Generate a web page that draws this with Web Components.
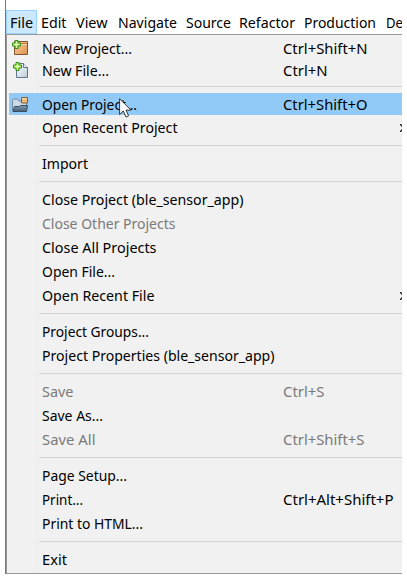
<!DOCTYPE html>
<html lang="en"><head><meta charset="utf-8"><title>File menu</title>
<style>html,body{margin:0;background:#fff;width:407px;height:580px;overflow:hidden}body{font:14.1px/20px "Noto Sans","Open Sans",sans-serif;color:#000}</style></head><body>
<app-window></app-window>
<script>
class FitText extends HTMLElement{
 connectedCallback(){
  const r=this.attachShadow({mode:'open'});
  r.innerHTML='<style>:host{display:block;white-space:nowrap}span{display:inline-block;transform-origin:0 50%}</style><span><slot></slot></span>';
  const s=r.querySelector('span'),w=+this.getAttribute('w');
  if(w)s.style.transform=`scaleX(${w/s.getBoundingClientRect().width})`;
 }
}
customElements.define('fit-text',FitText);
const plus='<path d="M3 .5h3v2.500h2.500v3h-2.500v2.500h-3v-2.500h-2.500v-3h2.500z" fill="#b5ef72" stroke="#2f8a16"/><path d="M4.500 1.500v6M1.500 4.500h6" stroke="#dcffac"/>';
const icons={
project:'<defs><linearGradient id="g" x2="1" y2="1"><stop stop-color="#f8cf98"/><stop offset="1" stop-color="#dc9250"/></linearGradient></defs><path d="M2.500 1.500h13v13h-13z" fill="url(#g)" stroke="#80552f"/><path d="M9 3.500h6" stroke="#b77b43"/><path d="M3 4.500h12" stroke="#f7d3a0"/>'+plus,
file:'<defs><linearGradient id="g" x2="1" y2="1"><stop stop-color="#fff"/><stop offset="1" stop-color="#b9cbda"/></linearGradient></defs><path d="M4.500 1.500h7l4 4v10h-11z" fill="url(#g)" stroke="#63758a"/><path d="M11.500 1.500v4h4" fill="#edf5fb" stroke="#63758a"/><g transform="translate(1 0)">'+plus+'</g>',
open:'<defs><linearGradient id="g" x2="0" y2="1"><stop stop-color="#849cb1"/><stop offset="1" stop-color="#465c73"/></linearGradient></defs><path d="M.5 14.500v-10l1-1.500h4l1.500 2h7.500v9.500z" fill="#cbd9e5" stroke="#71879d"/><path d="M1 15.500l1.500-5h5l1-1h7l-1 6z" fill="url(#g)" stroke="#344b63"/><path d="M9.500 1.500h6v5.500h-6z" fill="#f0bc78" stroke="#855d35"/><path d="M10 2.500h5" stroke="#ffdda4"/>'};
class MenuItem extends HTMLElement{
 connectedCallback(){
  const a=n=>this.getAttribute(n),r=this.attachShadow({mode:'open'});
  r.innerHTML=`<style>:host{display:grid;grid-template-columns:28px 5px 241px 119px;height:24px;align-items:center;margin-left:1px;position:relative}
  :host([disabled]){color:#7a7a7a}:host([selected]){background:#91c9f7;height:22px!important;margin-bottom:1px}:host([selected]) fit-text{padding-top:1px}
  .icon{width:17px;height:17px;margin-left:3px;display:block}.label{grid-column:3}.key{grid-column:4}
  .arrow{position:absolute;right:0;top:8px;width:2px;height:8px}
  </style>${a('icon')?`<svg class="icon" viewBox="0 0 17 17">${icons[a('icon')]}</svg>`:''}
  <fit-text class="label" w="${a('w')}">${a('label')}</fit-text>${a('key')?`<fit-text class="key" w="${a('kw')}">${a('key')}</fit-text>`:''}
  ${this.hasAttribute('sub')?'<svg class="arrow" viewBox="0 0 2 8"><path d="M0 0l4 4-4 4" fill="none" stroke="#222" stroke-width="1.300"/></svg>':''}`;
  if(a('h'))this.style.height=a('h')+'px';
 }
}
customElements.define('menu-item',MenuItem);
customElements.define('menu-separator',class extends HTMLElement{
 connectedCallback(){this.attachShadow({mode:'open'}).innerHTML='<style>:host{display:block;height:12px;box-sizing:border-box;padding:5px 0 0 31px}div{height:1px;background:#d5d5d5}</style><div></div>'}
});
customElements.define('menu-bar',class extends HTMLElement{
 connectedCallback(){
  const m=[['File',31,23],['Edit',35,25.500],['View',42,31.500],['Navigate',68,59],['Source',53,45],['Refactor',65,56],['Production',82,72],['De',17,17]];
  this.attachShadow({mode:'open'}).innerHTML=`<style>:host{display:flex;box-sizing:border-box;height:34px;padding-top:10px;overflow:hidden}.tab{flex:none;box-sizing:border-box;height:24px;padding-top:3px}.on{background:#cce8ff;border:1px solid #99d1ff;padding:2px 0 0 3px}</style>${m.map((x,i)=>`<div class="tab ${i?'':'on'}" style="width:${x[1]}px${i==1?';margin-left:4px':''}"><fit-text w="${x[2]}">${x[0]}</fit-text></div>`).join('')}`;
 }
});
customElements.define('mouse-pointer',class extends HTMLElement{
 connectedCallback(){this.attachShadow({mode:'open'}).innerHTML='<style>:host{position:absolute;left:119px;top:98px;width:13px;height:20px}svg{display:block}</style><svg width="13" height="20" viewBox="0 0 13 20"><path d="M.6.8v15.700l3.700-3.500 2.700 6 2.600-1.200-2.600-5.700h5z" fill="#fff" stroke="#222" stroke-width=".9"/></svg>'}
});
customElements.define('app-window',class extends HTMLElement{
 connectedCallback(){
  const I=(label,w,x='')=>`<menu-item label="${label}" w="${w}" ${x}></menu-item>`,K=(k,w)=>`key="${k}" kw="${w}"`,S='<menu-separator></menu-separator>';
  this.attachShadow({mode:'open'}).innerHTML=`<style>:host{display:block;position:relative;box-sizing:border-box;height:574px;border-left:1px solid #777;margin-left:5px;width:397px}
  .menu{box-sizing:border-box;height:540px;background:linear-gradient(90deg,#f1f1f1 30px,#ededed 30px 31px,#f1f1f1 31px);border:solid #999;border-width:1px 0 1px 1px;padding:2px 0 0 1px}
  menu-bar{width:396px}mouse-pointer{margin-left:-6px}</style><menu-bar></menu-bar><div class="menu">
  ${I('New Project...',90,'icon="project" h="23" '+K('Ctrl+Shift+N',84.500))}
  ${I('New File...',67,'icon="file" h="21" '+K('Ctrl+N',44.500))}${S}
  ${I('Open Project...',95,'icon="open" selected '+K('Ctrl+Shift+O',84.500))}
  ${I('Open Recent Project',135.500,'sub')}${S}${I('Import',46)}${S}
  ${I('Close Project (ble_sensor_app)',201.500)}${I('Close Other Projects',133.500,'disabled')}${I('Close All Projects',114.500)}${I('Open File...',73)}${I('Open Recent File',112.500,'sub')}${S}
  ${I('Project Groups...',107)}${I('Project Properties (ble_sensor_app)',232.500)}${S}
  ${I('Save',31.500,'disabled '+K('Ctrl+S',41.500))}${I('Save As...',61)}${I('Save All',53.500,'disabled '+K('Ctrl+Shift+S',81.500))}${S}
  ${I('Page Setup...',85)}${I('Print...',41,K('Ctrl+Alt+Shift+P',110.500))}${I('Print to HTML...',101)}${S}${I('Exit',25)}
  </div><mouse-pointer></mouse-pointer>`;
 }
});
</script></body></html>
